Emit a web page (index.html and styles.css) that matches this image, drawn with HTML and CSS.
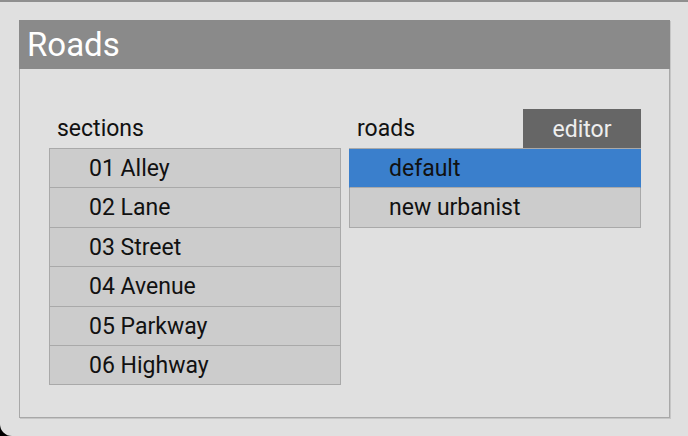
FILE: index.html
```html
<!DOCTYPE html>
<html lang="en">
<head>
  <meta charset="UTF-8" />
  <title>Roads</title>
  <link rel="stylesheet" href="styles.css">
</head>
<body>
  <div class="window">
    <div class="panel">
      <div class="panel-title">Roads</div>
      <div class="panel-body">
        <div class="column">
          <div class="column-head">
            <span class="label">sections</span>
          </div>
          <ul class="list">
            <li>01 Alley</li>
            <li>02 Lane</li>
            <li>03 Street</li>
            <li>04 Avenue</li>
            <li>05 Parkway</li>
            <li>06 Highway</li>
          </ul>
        </div>
        <div class="column">
          <div class="column-head">
            <span class="label">roads</span>
            <button class="editor-btn">editor</button>
          </div>
          <ul class="list">
            <li class="selected">default</li>
            <li>new urbanist</li>
          </ul>
        </div>
      </div>
    </div>
  </div>
</body>
</html>
```

FILE: styles.css
```css
html, body {
  margin: 0;
  height: 100%;
  background: #000;
}
body {
  font-family: Roboto, "Liberation Sans", sans-serif;
  color: #111;
}
.window {
  height: 436px;
  box-sizing: border-box;
  background: #e0e0e0;
  border-top: 2px solid #8f8f8f;
  border-bottom-left-radius: 12px;
  padding: 18px 0 0 19px;
}
.panel {
  width: 651px;
  height: 398px;
  box-sizing: border-box;
  border: 1px solid #a8a8a8;
  border-top: none;
  box-shadow: 1px 1px 0 #c6c6c6;
}
.panel-title {
  height: 49px;
  line-height: 50px;
  background: #8a8a8a;
  color: #fff;
  font-size: 33px;
  padding-left: 8px;
  margin: 0 -1px;
}
.panel-body {
  display: grid;
  grid-template-columns: 292px 292px;
  column-gap: 8px;
  padding: 40px 0 0 29px;
}
.column-head {
  display: flex;
  justify-content: space-between;
  height: 39px;
  line-height: 40px;
  font-size: 23px;
}
.label {
  padding-left: 8px;
}
.editor-btn {
  width: 118px;
  height: 39px;
  border: none;
  background: #666;
  color: #eee;
  font-family: inherit;
  font-size: 23px;
  padding: 1px 0 0;
}
.list {
  list-style: none;
  margin: 0;
  padding: 0;
  border-top: 1px solid #a9a9a9;
}
.list li {
  height: 38.4px;
  line-height: 40px;
  overflow: hidden;
  font-size: 23px;
  padding-left: 39px;
  background: #ccc;
  border: 1px solid #a9a9a9;
  border-top: none;
}
.list li.selected {
  background: #3a7fcc;
  border-color: #3a7fcc;
  border-bottom-color: #a9a9a9;
}
```
